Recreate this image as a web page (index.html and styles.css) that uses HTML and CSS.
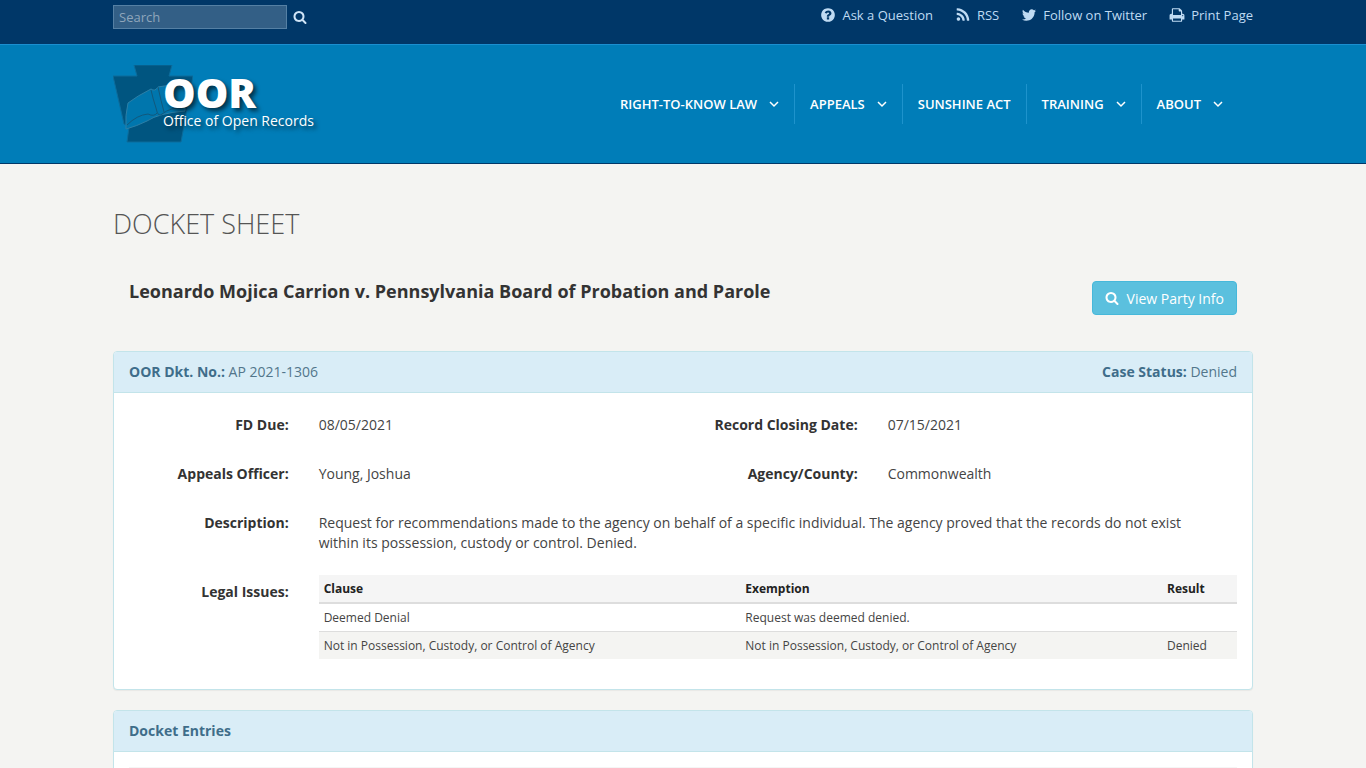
FILE: index.html
```html
<!DOCTYPE html>
<html lang="en">
<head>
  <meta charset="UTF-8" />
  <meta name="viewport" content="width=device-width, initial-scale=1.0" />
  <title>Docket Sheet</title>
  <link rel="stylesheet" href="styles.css">
</head>
<body>
  <div class="top-bar">
    <div class="container top-bar-inner">
      <form class="search-form">
        <input type="text" class="search-input" placeholder="Search" aria-label="Search">
        <button type="submit" class="search-button" aria-label="Search">
          <svg class="icon" viewBox="0 0 1792 1792"><path d="M1216 832q0-185-131.500-316.500t-316.500-131.500-316.500 131.500-131.500 316.500 131.500 316.500 316.500 131.500 316.500-131.500 131.500-316.500zm512 832q0 52-38 90t-90 38q-54 0-90-38l-343-342q-179 124-399 124-143 0-273.500-55.500t-225-150-150-225-55.500-273.500 55.500-273.500 150-225 225-150 273.500-55.500 273.500 55.500 225 150 150 225 55.500 273.500q0 220-124 399l343 343q37 37 37 90z"/></svg>
        </button>
      </form>
      <ul class="top-links">
        <li><a href="#"><svg class="icon icon-lg" viewBox="0 0 1792 1792"><path d="M1024 1376v-192q0-14-9-23t-23-9h-192q-14 0-23 9t-9 23v192q0 14 9 23t23 9h192q14 0 23-9t9-23zm256-672q0-88-55.500-163t-138.500-116-170-41q-243 0-371 213-15 24 8 42l132 100q7 6 19 6 16 0 25-12 53-68 86-92 34-24 86-24 48 0 85.500 26t37.500 59q0 38-20 61t-68 45q-63 28-115.500 86.500t-52.500 125.500v36q0 14 9 23t23 9h192q14 0 23-9t9-23q0-19 21.500-49.500t54.500-49.500q32-18 49-28.500t46-35 44.500-48 28-60.500 12.500-81zm384 192q0 209-103 385.500t-279.500 279.500-385.500 103-385.500-103-279.500-279.500-103-385.500 103-385.500 279.500-279.500 385.500-103 385.500 103 279.500 279.500 103 385.500z"/></svg>Ask a Question</a></li>
        <li><a href="#"><svg class="icon icon-lg" viewBox="0 0 1792 1792"><path d="M576 1344q0 80-56 136t-136 56-136-56-56-136 56-136 136-56 136 56 56 136zm512 123q2 28-17 48-18 21-47 21h-135q-25 0-43-16.500t-20-41.500q-22-229-184.500-391.500t-391.500-184.500q-25-2-41.500-20t-16.500-43v-135q0-29 21-47 17-17 43-17h5q160 13 306 80.500t259 181.500q114 113 181.500 259t80.500 306zm512 2q2 27-18 47-18 20-46 20h-143q-26 0-44.500-17.500t-19.500-42.500q-12-215-101-408.500t-231.500-336-336-231.500-408.500-102q-25-1-42.500-19.500t-17.500-43.500v-143q0-28 20-46 18-18 44-18h3q262 13 501.500 120t425.500 294q187 186 294 425.500t120 501.500z"/></svg>RSS</a></li>
        <li><a href="#"><svg class="icon icon-lg" viewBox="0 0 1792 1792"><path d="M1684 408q-67 98-162 167 1 14 1 42 0 130-38 259.500t-115.500 248.500-184.500 210.500-258 146-323 54.500q-271 0-496-145 35 4 78 4 225 0 401-138-105-2-188-64.500t-114-159.500q33 5 61 5 43 0 85-11-112-23-185.500-111.500t-73.500-205.500v-4q68 38 146 41-66-44-105-115t-39-154q0-88 44-163 121 149 294.500 238.500t371.500 99.500q-8-38-8-74 0-134 94.500-228.500t228.500-94.500q140 0 236 102 109-21 205-78-37 115-142 178 93-10 186-50z"/></svg>Follow on Twitter</a></li>
        <li><a href="#"><svg class="icon icon-lg" viewBox="0 0 1792 1792"><path d="M448 1536h896v-256h-896v256zm0-640h896v-384h-160q-40 0-68-28t-28-68v-160h-640v640zm1152 64q0-26-19-45t-45-19-45 19-19 45 19 45 45 19 45-19 19-45zm128 0v416q0 13-9.500 22.500t-22.500 9.500h-224v160q0 40-28 68t-68 28h-960q-40 0-68-28t-28-68v-160h-224q-13 0-22.500-9.500t-9.500-22.500v-416q0-79 56.500-135.500t135.500-56.500h64v-544q0-40 28-68t68-28h672q40 0 88 20t76 48l152 152q28 28 48 76t20 88v256h64q79 0 135.500 56.500t56.500 135.500z"/></svg>Print Page</a></li>
      </ul>
    </div>
  </div>

  <header class="header">
    <div class="container header-inner">
      <a href="#" class="logo">
        <svg class="logo-mark" viewBox="0 0 80 78">
          <path class="keystone" d="M21 0H59L56 11H80L68 77H14L16 62L11 59L0 11H24Z"/>
          <path class="book" d="M15 38Q24 31 38 24Q42 27 45 22Q58 19 72 23V46Q46 48 34 56Q24 61 13 64Q12 50 15 38Z"/>
          <path class="book-line" d="M38 25Q40 34 43 43Q45 53 49 49Q58 42 70 43M14 60Q24 50 35 49Q41 52 44 48M45 22Q48 36 51 47"/>
        </svg>
        <span class="logo-text">
          <span class="logo-title">OOR</span>
          <span class="logo-subtitle">Office of Open Records</span>
        </span>
      </a>
      <nav>
        <ul class="main-nav">
          <li><a href="#">RIGHT-TO-KNOW LAW<svg class="chevron" viewBox="0 0 10 10"><path d="M1 3l4 4 4-4"/></svg></a></li>
          <li><a href="#">APPEALS<svg class="chevron" viewBox="0 0 10 10"><path d="M1 3l4 4 4-4"/></svg></a></li>
          <li><a href="#">SUNSHINE ACT</a></li>
          <li><a href="#">TRAINING<svg class="chevron" viewBox="0 0 10 10"><path d="M1 3l4 4 4-4"/></svg></a></li>
          <li><a href="#">ABOUT<svg class="chevron" viewBox="0 0 10 10"><path d="M1 3l4 4 4-4"/></svg></a></li>
        </ul>
      </nav>
    </div>
  </header>

  <main class="container">
    <h1 class="page-title">DOCKET SHEET</h1>

    <div class="case-header">
      <h2>Leonardo Mojica Carrion v. Pennsylvania Board of Probation and Parole</h2>
      <button type="button" class="btn-info">
        <svg class="icon" viewBox="0 0 1792 1792"><path d="M1216 832q0-185-131.500-316.500t-316.500-131.500-316.500 131.500-131.500 316.500 131.500 316.500 316.500 131.500 316.500-131.500 131.500-316.500zm512 832q0 52-38 90t-90 38q-54 0-90-38l-343-342q-179 124-399 124-143 0-273.500-55.500t-225-150-150-225-55.500-273.500 55.500-273.500 150-225 225-150 273.500-55.500 273.500 55.500 225 150 150 225 55.500 273.500q0 220-124 399l343 343q37 37 37 90z"/></svg>View Party Info
      </button>
    </div>

    <section class="panel">
      <div class="panel-heading">
        <span><strong>OOR Dkt. No.:</strong> AP 2021-1306</span>
        <span><strong>Case Status:</strong> Denied</span>
      </div>
      <div class="panel-body">
        <dl class="details">
          <dt>FD Due:</dt>
          <dd>08/05/2021</dd>
          <dt>Record Closing Date:</dt>
          <dd>07/15/2021</dd>
          <dt>Appeals Officer:</dt>
          <dd>Young, Joshua</dd>
          <dt>Agency/County:</dt>
          <dd>Commonwealth</dd>
          <dt>Description:</dt>
          <dd class="wide description">Request for recommendations made to the agency on behalf of a specific individual. The agency proved that the records do not exist within its possession, custody or control. Denied.</dd>
          <dt>Legal Issues:</dt>
          <dd class="wide table-cell">
            <table class="table issues">
              <thead>
                <tr><th>Clause</th><th>Exemption</th><th class="result">Result</th></tr>
              </thead>
              <tbody>
                <tr><td>Deemed Denial</td><td>Request was deemed denied.</td><td></td></tr>
                <tr><td>Not in Possession, Custody, or Control of Agency</td><td>Not in Possession, Custody, or Control of Agency</td><td>Denied</td></tr>
              </tbody>
            </table>
          </dd>
        </dl>
      </div>
    </section>

    <section class="panel">
      <div class="panel-heading"><strong>Docket Entries</strong></div>
      <div class="panel-body entries-body">
        <table class="table">
          <thead>
            <tr><th>&nbsp;</th></tr>
          </thead>
        </table>
      </div>
    </section>
  </main>
</body>
</html>
```
FILE: styles.css
```css
* {
  box-sizing: border-box;
}
body {
  margin: 0;
  font-family: 'Open Sans', sans-serif;
  font-size: 14px;
  line-height: 20px;
  color: #444;
  background: #f4f4f2;
}
ul {
  list-style: none;
  margin: 0;
  padding: 0;
}
a {
  text-decoration: none;
}
.container {
  max-width: 1170px;
  margin: 0 auto;
  padding: 0 15px;
}
.icon {
  width: 14px;
  height: 14px;
  fill: currentColor;
}
.icon-lg {
  width: 16px;
  height: 16px;
}

/* top bar */
.top-bar {
  background: #003768;
}
.top-bar-inner {
  display: flex;
  justify-content: space-between;
  height: 44px;
  padding-top: 5px;
}
.search-form {
  display: flex;
  align-items: center;
  height: 24px;
}
.search-input {
  width: 174px;
  height: 24px;
  padding: 0 5px;
  border: 1px solid #5580a4;
  background: #335f86;
  color: #fff;
  font-family: inherit;
  font-size: 13px;
}
.search-input::placeholder {
  color: #8fa6bb;
}
.search-button {
  display: flex;
  padding: 0 6px;
  border: none;
  background: none;
  color: #cfe4f7;
  cursor: pointer;
}
.top-links {
  display: flex;
  gap: 22px;
}
.top-links a {
  display: flex;
  align-items: center;
  gap: 6px;
  font-size: 13px;
  color: #bfdbf3;
}

/* header */
.header {
  background: #007db8;
  border-top: 1px solid #1b8fd0;
  border-bottom: 1px solid #003768;
}
.header-inner {
  display: flex;
  justify-content: space-between;
  align-items: center;
  height: 118px;
}
.logo {
  position: relative;
  padding-left: 50px;
  color: #fff;
  text-shadow: 3px 3px 4px rgba(0, 0, 0, 0.6);
}
.logo-mark {
  position: absolute;
  top: 0;
  left: 0;
  width: 80px;
  height: 78px;
}
.keystone {
  fill: #005580;
  stroke: #0d6c9b;
}
.book {
  fill: #0076ad;
  stroke: #2c7fa6;
}
.book-line {
  fill: none;
  stroke: #12587c;
}
.logo-text {
  position: relative;
  display: flex;
  flex-direction: column;
  height: 78px;
  padding-top: 8px;
}
.logo-title {
  font-size: 41px;
  font-weight: 800;
  line-height: 38px;
}
.logo-subtitle {
  font-size: 14px;
  line-height: 20px;
}
.main-nav {
  display: flex;
  margin-right: 15px;
}
.main-nav li + li {
  border-left: 1px solid #1e93cc;
}
.main-nav a {
  display: flex;
  align-items: center;
  height: 40px;
  padding: 0 15px;
  font-size: 13px;
  font-weight: 600;
  color: #fff;
}
.chevron {
  width: 10px;
  height: 10px;
  margin-left: 12px;
  fill: none;
  stroke: #fff;
  stroke-width: 1.5;
}

/* docket */
.page-title {
  margin: 0;
  padding: 42px 0 38px;
  font-size: 27px;
  font-weight: 300;
  line-height: 36px;
  color: #555;
}
.case-header {
  display: flex;
  justify-content: space-between;
  align-items: flex-start;
  padding: 1px 16px 0;
  margin-bottom: 36px;
}
.case-header h2 {
  margin: 0;
  font-size: 18px;
  font-weight: 700;
  line-height: 20px;
  color: #333;
}
.btn-info {
  display: flex;
  align-items: center;
  gap: 8px;
  height: 34px;
  padding: 0 12px;
  border: 1px solid #46b8da;
  border-radius: 4px;
  background: #5bc0de;
  color: #fff;
  font-family: inherit;
  font-size: 14px;
  cursor: pointer;
}
.panel {
  margin-bottom: 20px;
  border: 1px solid #c3e4ea;
  border-radius: 4px;
  background: #fff;
  box-shadow: 0 1px 1px rgba(0, 0, 0, 0.05);
}
.panel-heading {
  display: flex;
  justify-content: space-between;
  padding: 10px 15px;
  border-bottom: 1px solid #c3e4ea;
  border-radius: 3px 3px 0 0;
  background: #d9edf7;
  color: #52768b;
}
.panel-heading strong {
  color: #3f6d8a;
}
.panel-body {
  padding: 15px 0;
}
.entries-body {
  padding: 15px;
}
.details {
  display: grid;
  grid-template-columns: 1fr 2fr 1fr 2fr;
  row-gap: 15px;
  margin: 0;
}
.details dt {
  padding: 7px 15px;
  font-weight: 700;
  text-align: right;
  color: #333;
}
.details dd {
  margin: 0;
  padding: 7px 15px;
}
.details .wide {
  grid-column: span 3;
}
.details .description {
  padding-right: 30px;
}
.details .table-cell {
  padding: 0 15px 15px;
}
.table {
  width: 100%;
  border-collapse: collapse;
  font-size: 12px;
  line-height: 17px;
}
.table th {
  padding: 5px;
  border-bottom: 2px solid #ddd;
  background: #f5f5f5;
  color: #222;
  text-align: left;
}
.table td {
  padding: 5px;
}
.issues {
  table-layout: fixed;
}
.issues .result {
  width: 75px;
}
.issues tbody tr + tr {
  border-top: 1px solid #ddd;
  background: #f4f4f2;
}
```
